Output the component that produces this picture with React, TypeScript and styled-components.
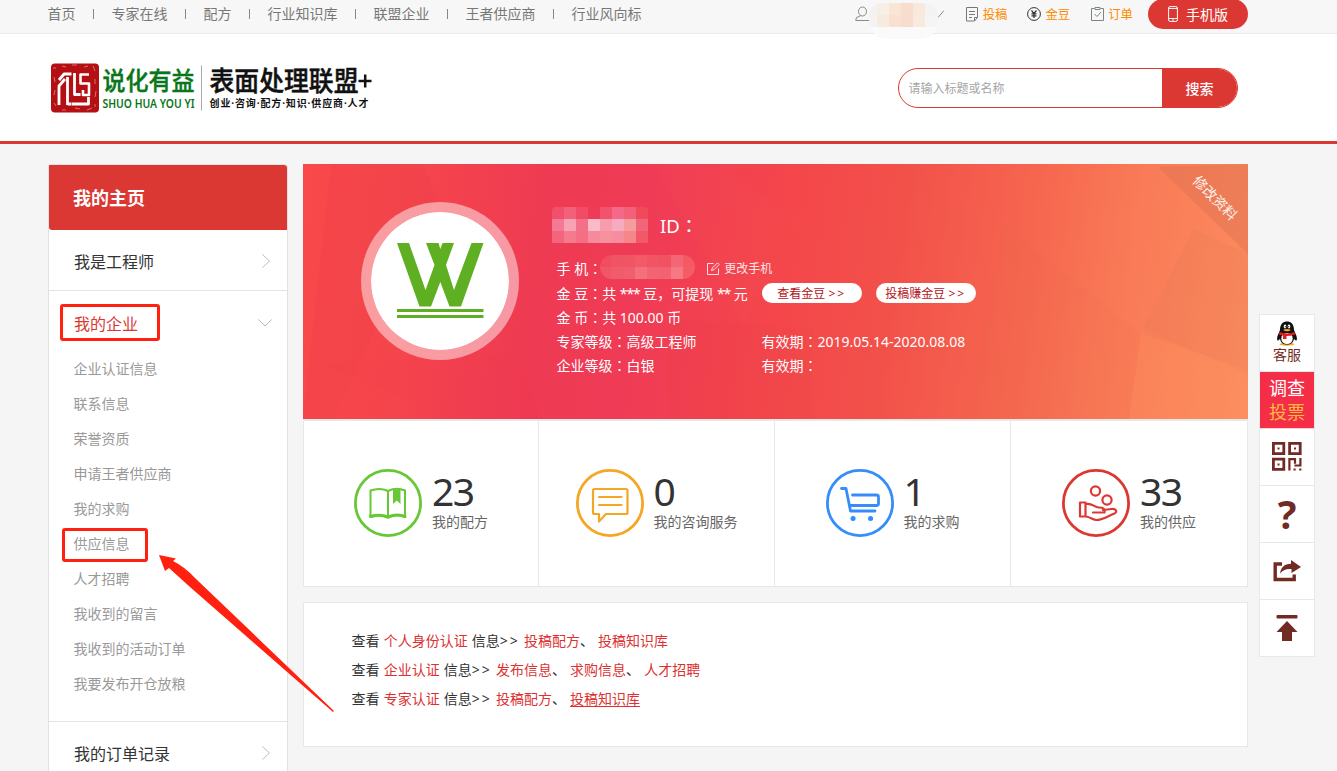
import React from "react";
import styled, { createGlobalStyle, css } from "styled-components";

const RED = "#dc3833";
const MARK = "#ff2010";
const LINE = "#e8e8e8";

const GlobalStyle = createGlobalStyle`
  * { box-sizing: border-box; }
  body {
    margin: 0;
    background: #f5f5f5;
    font-family: "Noto Sans", "Noto Sans CJK SC", sans-serif;
    font-size: 14px;
    color: #333;
    overflow: hidden;
  }
`;

const Page = styled.div`
  position: relative;
  height: 771px;
  overflow: hidden;
  white-space: nowrap;
`;

/* ---------- top bar ---------- */
const TopBar = styled.div`
  height: 34px;
  padding: 0 89px 0 47.5px;
  background: #f7f7f7;
  border-bottom: 1px solid #ebebeb;
  display: flex;
  justify-content: space-between;
`;
const Nav = styled.nav`
  display: flex;
  align-items: center;
  height: 26px;
  gap: 17.5px;
  color: #777;
`;
const NavDivider = styled.i`
  width: 1px;
  height: 10px;
  margin-top: 2px;
  background: #888;
`;
const UserTools = styled.div`
  display: flex;
  align-items: center;
  height: 28px;
`;
const Blurred = styled.div`
  position: relative;
  z-index: 1;
  width: 69px;
  height: 36px;
  margin-top: 14px;
  border-radius: 14px 14px 18px 18px;
  background: #fafafa;
  overflow: hidden;
  display: grid;
  grid-template-columns: 8px 12px 12px 12px 12px 13px;
  grid-template-rows: 12px 12px 12px;
`;
const Block = styled.i<{ $c: string }>`
  background: ${(p) => p.$c};
`;
const Tick = styled.svg`
  margin-right: 22px;
`;
const ToolLink = styled.a<{ $gap: number }>`
  display: flex;
  align-items: center;
  gap: 4px;
  margin-right: ${(p) => p.$gap}px;
  color: #ff8a00;
  font-size: 12.4px;
  svg { display: block; }
`;
const MobileButton = styled.a`
  display: flex;
  align-items: center;
  justify-content: center;
  gap: 8px;
  width: 100px;
  height: 30px;
  border-radius: 15px;
  background: ${RED};
  color: #fff;
  font-size: 14px;
`;

/* ---------- header ---------- */
const Header = styled.header`
  height: 110px;
  padding: 0 99px 0 50px;
  background: #fff;
  border-bottom: 3px solid ${RED};
  display: flex;
  align-items: center;
  justify-content: space-between;
`;
const SearchBox = styled.div`
  display: flex;
  width: 340px;
  height: 40px;
  border: 1px solid ${RED};
  border-radius: 20px;
  overflow: hidden;
`;
const SearchInput = styled.div`
  flex: 1;
  padding-left: 9.5px;
  line-height: 40px;
  font-size: 12px;
  color: #a5a5a5;
`;
const SearchButton = styled.div`
  width: 75px;
  line-height: 39px;
  text-align: center;
  background: ${RED};
  color: #fff;
  font-weight: 500;
`;

/* ---------- body ---------- */
const Body = styled.div`
  display: flex;
  align-items: flex-start;
  padding: 20px 0 0 48px;
`;
const Sidebar = styled.aside`
  width: 240px;
  height: 640px;
  background: #fff;
  border: 1px solid #e2e2e2;
  border-radius: 3px;
`;
const SideTitle = styled.div`
  height: 65px;
  padding-left: 24px;
  line-height: 66px;
  border-radius: 0 3px 0 3px;
  background: ${RED};
  color: #fff;
  font-size: 18px;
  font-weight: 700;
`;
const SideItem = styled.div<{ $active?: boolean }>`
  display: flex;
  align-items: center;
  justify-content: space-between;
  height: 60px;
  padding: ${(p) => (p.$active ? 3 : 2)}px 15px 0 25px;
  font-size: 16px;
  color: ${(p) => (p.$active ? RED : "#333")};
`;
const SubList = styled.ul`
  margin: 0;
  padding: 0 0 20px 24.5px;
  list-style: none;
`;
const SubItem = styled.li`
  height: 35px;
  line-height: 35px;
  color: #999;
`;
const SideRule = styled.div`
  height: 1px;
  background: #e4e4e4;
`;

const Main = styled.main`
  width: 945px;
  margin-left: 15px;
`;
const Banner = styled.section`
  position: relative;
  display: flex;
  height: 255px;
  color: #fff;
  overflow: hidden;
  background: linear-gradient(
    98deg,
    #f9494a 0%,
    #f5454c 12%,
    #ee3a52 26%,
    #f03b56 36%,
    #f4464b 50%,
    #f2514a 62%,
    #f6664f 75%,
    #f97b57 86%,
    #fc8c5f 100%
  );
`;
const Facets = styled.svg`
  position: absolute;
  inset: 0;
`;
const Avatar = styled.div`
  position: relative;
  width: 158px;
  height: 158px;
  margin: 38px 0 0 58px;
  border: 10px solid rgba(255, 255, 255, 0.48);
  border-radius: 50%;
  background: #fff;
  background-clip: padding-box;
  display: flex;
  justify-content: center;
  padding-top: 30px;
`;
const Profile = styled.div`
  position: relative;
  margin: 43px 0 0 33px;
`;
const NameRow = styled.div`
  display: flex;
  align-items: center;
  height: 36px;
  gap: 12px;
  margin-bottom: 12px;
  font-size: 18.5px;
`;
const NameMosaic = styled.div`
  display: grid;
  grid-template-columns: repeat(8, 12px);
  grid-auto-rows: 12px;
  border-radius: 4px 4px 0 0;
  overflow: hidden;
`;
const PhoneMosaic = styled.div`
  display: grid;
  grid-template-columns: 11px repeat(7, 12px);
  grid-auto-rows: 12px;
  margin: -2px 0 0 -2px;
  border-radius: 12px;
  overflow: hidden;
`;
const Row = styled.div<{ $h?: number }>`
  display: flex;
  align-items: center;
  height: ${(p) => p.$h ?? 24}px;
  padding-left: 4.5px;
`;
const FieldCell = styled.span`
  width: 205px;
`;
const ColonGlyph = styled.span`
  font-family: "Noto Sans CJK JP", sans-serif;
`;
const Stars = styled.span`
  letter-spacing: -1.1px;
`;
const ChangePhone = styled.a`
  display: flex;
  align-items: center;
  gap: 4px;
  margin-left: 12px;
  font-size: 12px;
  opacity: 0.85;
`;
const PillLink = styled.a`
  width: 100px;
  height: 20px;
  margin-left: 14px;
  line-height: 21px;
  border-radius: 10px;
  background: #fff;
  color: #b3141c;
  font-size: 12px;
  text-align: center;
`;
const Spaced = styled.span`
  letter-spacing: 2px;
`;
const CornerText = styled.a`
  position: absolute;
  top: 25px;
  right: 5px;
  width: 56px;
  line-height: 18px;
  transform: rotate(45deg);
  font-size: 14px;
  opacity: 0.9;
`;

const Stats = styled.section`
  display: grid;
  grid-template-columns: 235px 236px 236px 1fr;
  height: 168px;
  background: #fff;
  border: 1px solid ${LINE};
  border-top-width: 2px;
`;
const Stat = styled.div`
  display: flex;
  align-items: center;
  justify-content: center;
  gap: 10px;
  padding-bottom: 2px;
  border-right: 1px solid ${LINE};
  &:last-child { border-right: 0; }
`;
const StatNumber = styled.div`
  height: 38px;
  line-height: 36px;
  font-size: 39px;
  letter-spacing: -1.6px;
  color: #333;
`;
const StatLabel = styled.div`
  height: 22px;
  line-height: 22px;
  color: #666;
`;

const Links = styled.section`
  height: 145px;
  margin-top: 15px;
  padding: 23px 0 0 47.5px;
  background: #fff;
  border: 1px solid ${LINE};
`;
const LinkRow = styled.div`
  height: 29px;
  line-height: 29px;
  word-spacing: 0.5px;
`;
const Link = styled.a<{ $line?: boolean }>`
  color: #dd3131;
  ${(p) =>
    p.$line &&
    css`
      text-decoration: underline;
      text-underline-offset: 2px;
    `}
`;

const Rail = styled.aside`
  width: 56px;
  margin: 150px 0 0 11px;
  border: 1px solid ${LINE};
  border-bottom: 0;
  background: #fff;
  color: #712b24;
`;
const RailCell = styled.div<{ $hot?: boolean }>`
  display: flex;
  flex-direction: column;
  align-items: center;
  justify-content: center;
  height: 57px;
  padding-bottom: 1px;
  border-bottom: 1px solid ${(p) => (p.$hot ? "#f6d5d8" : LINE)};
  background: ${(p) => (p.$hot ? "#f42e46" : "#fff")};
  color: ${(p) => (p.$hot ? "#fff" : "inherit")};
  font-size: ${(p) => (p.$hot ? 18 : 14)}px;
  line-height: ${(p) => (p.$hot ? 24 : 18)}px;
`;
const Gold = styled.span`
  color: #ffb941;
`;
const Question = styled.span`
  font-size: 39px;
  line-height: 40px;
  font-weight: 700;
`;

/* ---------- annotations over the page ---------- */
const MarkBox = styled.div<{ $x: number; $y: number; $w: number; $h: number }>`
  position: absolute;
  left: ${(p) => p.$x}px;
  top: ${(p) => p.$y}px;
  width: ${(p) => p.$w}px;
  height: ${(p) => p.$h}px;
  border: 3px solid ${MARK};
  border-radius: 3px;
`;
const MarkArrow = styled.svg`
  position: absolute;
  left: 150px;
  top: 545px;
`;

const Colon = () => <ColonGlyph>：</ColonGlyph>;

const UserIcon = () => (
  <svg width="14" height="16" viewBox="0 0 14 16" fill="none" stroke="#8a8a8a">
    <ellipse cx="7.5" cy="5.5" rx="4" ry="4.5" />
    <path d="M5.5 9.8 1.5 11.5 .7 14.5H14" />
  </svg>
);
const DraftIcon = () => (
  <svg width="13" height="15" viewBox="0 0 13 15" fill="none" stroke="#777">
    <path d="M.5.5h11v10l-3 3.5h-8zM8.500 14v-3.500h3M3 4.500h6M3 7.500h6M3 10.500h3" />
  </svg>
);
const CoinIcon = () => (
  <svg width="14" height="14" viewBox="0 0 14 14" fill="none" stroke="#333">
    <circle cx="7" cy="7" r="6.400" />
    <path d="M4.500 3.500 7 6.500l2.500-3M4.500 6.800h5M4.500 8.900h5M7 6.500V11" strokeWidth="1.200" />
  </svg>
);
const OrderIcon = () => (
  <svg width="13" height="14" viewBox="0 0 13 14" fill="none" stroke="#7b8683">
    <path d="M3.500 1.500h-3v12h12v-12h-3M4 .5h5v2H4zM3.500 7l2.500 2.500L10 5" />
  </svg>
);
const PhoneIcon = () => (
  <svg width="10" height="16" viewBox="0 0 10 16" fill="none" stroke="#fff">
    <rect x=".6" y=".6" width="8.800" height="14.800" rx="1.500" />
    <path d="M1 2.500h8M1 12.500h8M4 14h2" strokeWidth=".9" />
  </svg>
);
const ChevronRight = () => (
  <svg width="12" height="14" viewBox="0 0 12 14" fill="none" stroke="#b8bcc8">
    <path d="M2.500.5 9.500 7l-7 6.500" />
  </svg>
);
const ChevronDown = () => (
  <svg width="14" height="8" viewBox="0 0 14 8" fill="none" stroke="#b5b5b5">
    <path d="M.5.500 7 7 13.500.5" />
  </svg>
);
const EditIcon = () => (
  <svg width="13" height="13" viewBox="0 0 13 13" fill="none" stroke="#fff">
    <path d="M6.500 1.500h-6v11h11v-6M4.500 8.500l.8-2.500L10.500.8l1.700 1.700L7 7.700z" />
  </svg>
);

const Logo = () => (
  <svg width="325" height="52" viewBox="0 0 325 52">
    <rect x="1" y="1.500" width="48" height="49" rx="4" fill="#b40f12" />
    <path
      d="M3 6h3M12 4l4 1M22 3h5M34 5l4-1M43 4l2 5M4 15l1 5M45 17v5M5 28l-1 5M46 29l-1 6M4 41l2 3M12 48h4M25 46l5 1M37 48l5-2M45 42v3"
      stroke="#dd7a78"
      strokeWidth=".9"
    />
    <g fill="none" stroke="#fff" strokeWidth="2.800" strokeLinejoin="round">
      <path d="M9 18l5-6h7.500M9 43V24l6-7M17.500 43V15M17.500 42h4" />
      <path d="M24.500 11v21.500h6M22 42h16.500V35" />
      <path d="M39 12.500h-8.500v9h8.500v11.500h-6v-5" strokeWidth="2.600" />
    </g>
    <g fontFamily='"Noto Sans", "Noto Sans CJK SC", sans-serif' fontWeight="700">
      <text x="52.500" y="27.500" fontSize="25" fontWeight="500" fill="#08761a" stroke="#08761a" strokeWidth=".4" textLength="92" lengthAdjust="spacingAndGlyphs">
        说化有益
      </text>
      <text x="52.500" y="45.500" fontSize="13" fontWeight="600" fill="#08761a" textLength="92" lengthAdjust="spacingAndGlyphs" fontFamily='"Noto Sans", sans-serif'>
        SHUO HUA YOU YI
      </text>
      <path d="M151.500 3.500v45" stroke="#aaa" />
      <text x="159.500" y="28.500" fontSize="27" fill="#111" fontWeight="500" stroke="#111" strokeWidth=".5" textLength="149" lengthAdjust="spacingAndGlyphs">
        表面处理联盟
      </text>
      <path d="M315.200 12.500v13M308.500 19h13" stroke="#111" strokeWidth="2.500" />
      <text x="159.500" y="45" fontSize="10" fill="#111" textLength="159" lengthAdjust="spacing">
        创业·咨询·配方·知识·供应商·人才
      </text>
    </g>
  </svg>
);

const WLogo = () => (
  <svg width="87" height="80" viewBox="0 0 87 80">
    <g fill="#5eb022">
      <path d="M0 1H12L28.500 48 37.500 23 29 1H41.500L43.300 7 45.500 1H57L49 23 57 48 74.500 1H86.500L64 64.500H52.500L43.300 40 34 64.500H22.500z" />
      <rect x="0" y="67" width="86.500" height="3" />
      <rect x="0" y="73" width="86.500" height="3" />
    </g>
  </svg>
);

const Ring = ({ color, children }: { color: string; children: React.ReactNode }) => (
  <svg width="68" height="68" viewBox="0 0 68 68" fill="none" stroke={color} strokeWidth="2.200" strokeLinejoin="round" strokeLinecap="round">
    <circle cx="34" cy="34" r="32.600" strokeWidth="2.800" />
    {children}
  </svg>
);
const BookIcon = () => (
  <Ring color="#67c836">
    <path d="M34 22c-5-2.500-12-2.500-17.500-.5v26.500c5.500-2 12.500-2 17.500.5 5-2.500 12-2.500 17-.5V21.500c-5-2-12-2-17 .5v25.500" strokeWidth="2" />
    <path d="M39 20.500h7.500v14.500l-3.700-3.500-3.800 3.500z" fill="#67c836" strokeWidth="0" />
    <path d="M16.500 47.500c6-2 12.500-1.500 17.500.5 5-2 12-2.500 17-.5" strokeWidth="3" />
  </Ring>
);
const ChatIcon = () => (
  <Ring color="#f5a623">
    <path d="M18.500 20h31.500q1.500 0 1.500 1.500v22q0 1.500-1.500 1.500H30l-7 7.500V45h-4.500Q17 45 17 43.500v-22q0-1.500 1.500-1.500zM23 28h22.500M23 36h22.500" />
  </Ring>
);
const CartIcon = () => (
  <Ring color="#348dfb">
    <path d="M15.500 19.500h4.500L24.500 42h24.500M26.500 26h24q2 0 2 2v6.500q0 2-2 2H24" strokeWidth="2.800" />
    <path d="M27 49.500h.1M44.500 49.500h.1" strokeWidth="5" />
  </Ring>
);
const HandIcon = () => (
  <Ring color="#dc3833">
    <circle cx="33.500" cy="22" r="4.600" />
    <circle cx="45" cy="31" r="4.600" />
    <path d="M18 33.500h5.500V47.500H18zM24 35c6-1.500 8 3.500 13 3.500 4 0 6 1 5.500 5H31M41 41l8.500-1c5-.5 6 3 3 4.500C46 47 40 51 34.500 51c-3.500 0-6-3-10.500-3.500" />
  </Ring>
);

const Penguin = () => (
  <svg width="20" height="25" viewBox="0 0 20 25">
    <ellipse cx="10" cy="23.200" rx="7.500" ry="1.500" fill="#f8ae1b" />
    <path d="M3 9C3 3 6 .5 10 .5S17 3 17 9l2.500 6c.8 3 .3 5-.7 4.500L17 18c-1 4-3 5.500-7 5.500S4 22 3 18l-1.800 1.500c-1 .5-1.500-1.500-.7-4.500z" fill="#111" />
    <ellipse cx="10" cy="17.500" rx="5.700" ry="5.500" fill="#fff" />
    <ellipse cx="8" cy="5.500" rx="1.300" ry="1.900" fill="#fff" />
    <ellipse cx="12" cy="5.500" rx="1.300" ry="1.900" fill="#fff" />
    <path d="M8.300 5v1.300M11.700 5v1.300" stroke="#111" strokeWidth=".9" />
    <path d="M6 9q4-2 8 0-4 2.500-8 0" fill="#f8ae1b" />
    <path d="M2.500 11q7.500 3 15 0l.5 2.500q-4 1.500-8.500 1.500v3H6V14.500q-2-.3-4-1z" fill="#e81c1f" />
  </svg>
);
const QrIcon = () => (
  <svg width="30" height="29" viewBox="0 0 30 29" fill="none" stroke="#712b24" strokeWidth="2.800">
    <path d="M1.400 1.400h10.400v10.200H1.400zM17.600 1.400h10.600v10.200h-10.600zM1.400 17.200h10.400v10.200H1.400z" />
    <path d="M5.500 6.500h2M22 6.500h2M5.500 22.500h2M17.400 28.500V17.200h5.600v4.500M28.400 16v7.500h-6M21.500 27.500h2.200M27.200 27.500h2.200" strokeWidth="2.200" />
  </svg>
);
const ShareIcon = () => (
  <svg width="28" height="22" viewBox="0 0 28 22">
    <path d="M9 4H2.200v15.500h19V14.500" fill="none" stroke="#712b24" strokeWidth="3.400" />
    <path d="M18 0l10 7-9.500 6V9C13 8.500 10 10 7 13.500 8 7.500 11 4 18 3.800z" fill="#712b24" />
  </svg>
);
const TopIcon = () => (
  <svg width="22" height="28" viewBox="0 0 22 28" fill="#712b24">
    <rect x=".5" y="1" width="21" height="3.600" rx="1" />
    <path d="M11 7l10.500 11H16v9H6v-9H.5z" />
  </svg>
);

const navItems = ["首页", "专家在线", "配方", "行业知识库", "联盟企业", "王者供应商", "行业风向标"];
const subItems = ["企业认证信息", "联系信息", "荣誉资质", "申请王者供应商", "我的求购", "供应信息", "人才招聘", "我收到的留言", "我收到的活动订单", "我要发布开仓放粮"];
const userBlocks = [
  "#f3f2f1", "#f7eee6", "#f8e5d6", "#f8dccd", "#f9e8dc", "#f4f3f2",
  "#f4f3f2", "#f7ebe0", "#f8e1d0", "#f8dccd", "#f8eade", "#f5f5f5",
];
const nameBlocks = [
  "#f0506b", "#f2607a", "#f04c68", "#ee3b57", "#f0536b", "#f4688a", "#f2607a", "#f04a5a",
  "#f47a94", "#f8a3b4", "#f37088", "#f9bcc6", "#f79cac", "#f6abc0", "#f59c9c", "#f2647a",
  "#f3647e", "#f57a8c", "#f46f86", "#f6899c", "#f6929e", "#f68d9e", "#f5868c", "#f25868",
];
const phoneBlocks = [
  "#f04e5f", "#f05464", "#f05565", "#f25a68", "#f15464", "#f05262", "#f56674", "#f45a64",
  "#f15668", "#f05c6c", "#f15e6e", "#f4707c", "#f26472", "#f26270", "#f67884", "#f45c66",
];

const stats = [
  { icon: <BookIcon />, value: 23, label: "我的配方" },
  { icon: <ChatIcon />, value: 0, label: "我的咨询服务" },
  { icon: <CartIcon />, value: 1, label: "我的求购" },
  { icon: <HandIcon />, value: 33, label: "我的供应" },
];

const linkRows = [
  { kind: "个人身份认证", links: ["投稿配方", "投稿知识库"] },
  { kind: "企业认证", links: ["发布信息", "求购信息", "人才招聘"] },
  { kind: "专家认证", links: ["投稿配方", "投稿知识库"], hovered: "投稿知识库" },
];

export default function App() {
  return (
    <Page>
      <GlobalStyle />
      <TopBar>
        <Nav>
          {navItems.map((item, i) => (
            <React.Fragment key={item}>
              {i > 0 && <NavDivider />}
              <span>{item}</span>
            </React.Fragment>
          ))}
        </Nav>
        <UserTools>
          <UserIcon />
          <Blurred>
            {userBlocks.map((c, i) => (
              <Block key={i} $c={c} />
            ))}
          </Blurred>
          <Tick width="6" height="8" viewBox="0 0 6 8">
            <path d="M0 7.500 6 .5" stroke="#888" />
          </Tick>
          <ToolLink $gap={20}><DraftIcon />投稿</ToolLink>
          <ToolLink $gap={21}><CoinIcon />金豆</ToolLink>
          <ToolLink $gap={15}><OrderIcon />订单</ToolLink>
          <MobileButton><PhoneIcon />手机版</MobileButton>
        </UserTools>
      </TopBar>

      <Header>
        <Logo />
        <SearchBox>
          <SearchInput>请输入标题或名称</SearchInput>
          <SearchButton>搜索</SearchButton>
        </SearchBox>
      </Header>

      <Body>
        <Sidebar>
          <SideTitle>我的主页</SideTitle>
          <SideItem>我是工程师<ChevronRight /></SideItem>
          <SideRule />
          <SideItem $active>我的企业<ChevronDown /></SideItem>
          <SubList>
            {subItems.map((s) => (
              <SubItem key={s}>{s}</SubItem>
            ))}
          </SubList>
          <SideRule />
          <SideItem>我的订单记录<ChevronRight /></SideItem>
        </Sidebar>

        <Main>
          <Banner>
            <Facets width="945" height="255" viewBox="0 0 945 255">
              <path d="M120 0 133 34 30 255H0L28 0z" fill="#d9304a" opacity=".07" />
              <path d="M210 190 240 255H150L20 200z" fill="#ff2d55" opacity=".06" />
              <path d="M440 160 500 60 420 0H350z" fill="#ff6a55" opacity=".06" />
              <path d="M365 155 510 165V255H365z" fill="#c93a3a" opacity=".04" />
              <path d="M840 165 890 65 945 90V210z" fill="#c86f50" opacity=".09" />
              <path d="M838 170 945 205V255H826z" fill="#ff9a60" opacity=".2" />
              <path d="M700 60 838 170 826 255H660z" fill="#dc6548" opacity=".06" />
              <path d="M855 3 945 0V90z" fill="#d86f50" opacity=".38" />
            </Facets>
            <Avatar><WLogo /></Avatar>
            <Profile>
              <NameRow>
                <NameMosaic>
                  {nameBlocks.map((c, i) => (
                    <Block key={i} $c={c} />
                  ))}
                </NameMosaic>
                <span>ID<Colon /></span>
              </NameRow>
              <Row $h={26}>
                <span>手 机<Colon /></span>
                <PhoneMosaic>
                  {phoneBlocks.map((c, i) => (
                    <Block key={i} $c={c} />
                  ))}
                </PhoneMosaic>
                <ChangePhone><EditIcon />更改手机</ChangePhone>
              </Row>
              <Row>
                <span>金 豆<Colon />共 <Stars>***</Stars> 豆，可提现 <Stars>**</Stars> 元</span>
                <PillLink>查看金豆 <Spaced>&gt;&gt;</Spaced></PillLink>
                <PillLink>投稿赚金豆 <Spaced>&gt;&gt;</Spaced></PillLink>
              </Row>
              <Row>
                <span>金 币<Colon />共 100.00 币</span>
              </Row>
              <Row>
                <FieldCell>专家等级<Colon />高级工程师</FieldCell>
                <span>有效期<Colon />2019.05.14-2020.08.08</span>
              </Row>
              <Row>
                <FieldCell>企业等级<Colon />白银</FieldCell>
                <span>有效期<Colon /></span>
              </Row>
            </Profile>
            <CornerText>修改资料</CornerText>
          </Banner>

          <Stats>
            {stats.map((s) => (
              <Stat key={s.label}>
                {s.icon}
                <div>
                  <StatNumber>{s.value}</StatNumber>
                  <StatLabel>{s.label}</StatLabel>
                </div>
              </Stat>
            ))}
          </Stats>

          <Links>
            {linkRows.map((row) => (
              <LinkRow key={row.kind}>
                查看 <Link>{row.kind}</Link> 信息<Spaced>&gt;&gt;</Spaced>{" "}
                {row.links.map((l, i) => (
                  <React.Fragment key={l}>
                    {i > 0 && "、 "}
                    <Link $line={row.hovered === l}>{l}</Link>
                  </React.Fragment>
                ))}
              </LinkRow>
            ))}
          </Links>
        </Main>

        <Rail>
          <RailCell><Penguin />客服</RailCell>
          <RailCell $hot>调查<Gold>投票</Gold></RailCell>
          <RailCell><QrIcon /></RailCell>
          <RailCell><Question>?</Question></RailCell>
          <RailCell><ShareIcon /></RailCell>
          <RailCell><TopIcon /></RailCell>
        </Rail>
      </Body>

      <MarkBox $x={60} $y={304} $w={100} $h={37} />
      <MarkBox $x={62} $y={528} $w={86} $h={34} />
      <MarkArrow width="190" height="172" viewBox="0 0 190 172">
        <path d="M9 10 26 13.500 23 16 Q35 22 45 33L184 166 183 167 40 42 Q30 33 19 23L15 26z" fill={MARK} />
      </MarkArrow>
    </Page>
  );
}
